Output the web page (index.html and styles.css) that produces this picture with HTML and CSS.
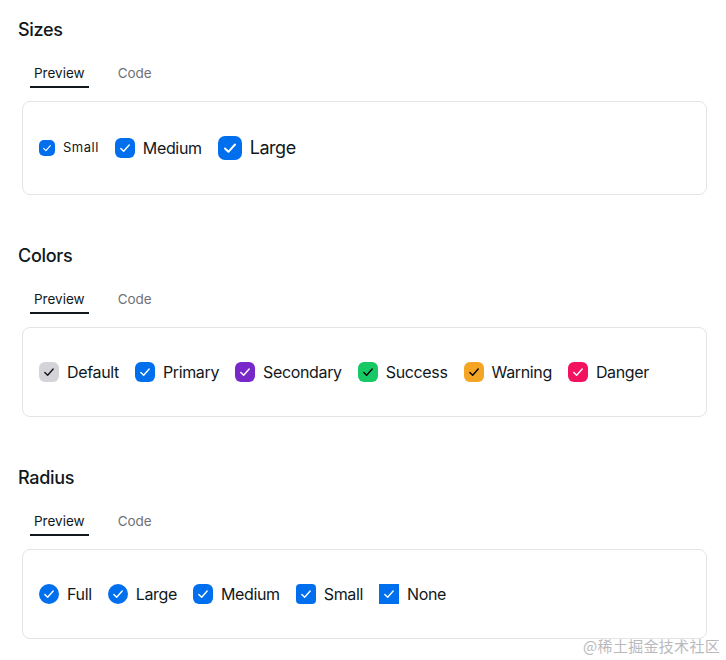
FILE: index.html
```html
<!DOCTYPE html>
<html>
<head>
<meta charset="utf-8">
<link rel="stylesheet" href="styles.css">
</head>
<body>
<main class="page">
  <section class="section">
    <h2 class="title">Sizes</h2>
    <div class="tabs"><span class="tab active">Preview</span><span class="tab">Code</span></div>
    <div class="card tall">
      <label class="cb sm"><span class="box primary"><svg viewBox="0 0 24 24"><path d="M7 12.5l3.4 3.3 6.6-7.3"/></svg></span><span class="lbl">Small</span></label>
      <label class="cb md"><span class="box primary"><svg viewBox="0 0 24 24"><path d="M7 12.5l3.4 3.3 6.6-7.3"/></svg></span><span class="lbl">Medium</span></label>
      <label class="cb lg"><span class="box primary"><svg viewBox="0 0 24 24"><path d="M7 12.5l3.4 3.3 6.6-7.3"/></svg></span><span class="lbl">Large</span></label>
    </div>
  </section>
  <section class="section">
    <h2 class="title">Colors</h2>
    <div class="tabs"><span class="tab active">Preview</span><span class="tab">Code</span></div>
    <div class="card">
      <label class="cb md"><span class="box default"><svg viewBox="0 0 24 24"><path d="M7 12.5l3.4 3.3 6.6-7.3"/></svg></span><span class="lbl">Default</span></label>
      <label class="cb md"><span class="box primary"><svg viewBox="0 0 24 24"><path d="M7 12.5l3.4 3.3 6.6-7.3"/></svg></span><span class="lbl">Primary</span></label>
      <label class="cb md"><span class="box secondary"><svg viewBox="0 0 24 24"><path d="M7 12.5l3.4 3.3 6.6-7.3"/></svg></span><span class="lbl">Secondary</span></label>
      <label class="cb md"><span class="box success"><svg viewBox="0 0 24 24"><path d="M7 12.5l3.4 3.3 6.6-7.3"/></svg></span><span class="lbl">Success</span></label>
      <label class="cb md"><span class="box warning"><svg viewBox="0 0 24 24"><path d="M7 12.5l3.4 3.3 6.6-7.3"/></svg></span><span class="lbl">Warning</span></label>
      <label class="cb md"><span class="box danger"><svg viewBox="0 0 24 24"><path d="M7 12.5l3.4 3.3 6.6-7.3"/></svg></span><span class="lbl">Danger</span></label>
    </div>
  </section>
  <section class="section">
    <h2 class="title">Radius</h2>
    <div class="tabs"><span class="tab active">Preview</span><span class="tab">Code</span></div>
    <div class="card">
      <label class="cb md"><span class="box primary r-full"><svg viewBox="0 0 24 24"><path d="M7 12.5l3.4 3.3 6.6-7.3"/></svg></span><span class="lbl">Full</span></label>
      <label class="cb md"><span class="box primary r-lg"><svg viewBox="0 0 24 24"><path d="M7 12.5l3.4 3.3 6.6-7.3"/></svg></span><span class="lbl">Large</span></label>
      <label class="cb md"><span class="box primary r-md"><svg viewBox="0 0 24 24"><path d="M7 12.5l3.4 3.3 6.6-7.3"/></svg></span><span class="lbl">Medium</span></label>
      <label class="cb md"><span class="box primary r-sm"><svg viewBox="0 0 24 24"><path d="M7 12.5l3.4 3.3 6.6-7.3"/></svg></span><span class="lbl">Small</span></label>
      <label class="cb md"><span class="box primary r-none"><svg viewBox="0 0 24 24"><path d="M7 12.5l3.4 3.3 6.6-7.3"/></svg></span><span class="lbl">None</span></label>
    </div>
  </section>
  <div class="watermark">@稀土掘金技术社区</div>
</main>
</body>
</html>
```
FILE: styles.css
```css
* { box-sizing: border-box; }
html, body { margin: 0; padding: 0; background: #fff; }
body {
  font-family: Inter, "Noto Sans", "Noto Sans CJK SC", sans-serif;
  color: #11181c;
}
.page {
  position: relative;
  width: 726px;
  height: 660px;
  padding: 17px 19px 0 18px;
  overflow: hidden;
}
.section { margin-bottom: 48px; }
.title {
  margin: 0;
  font-size: 18px;
  font-weight: 500;
  line-height: 26px;
  letter-spacing: -0.3px;
}
.tabs {
  display: flex;
  gap: 25px;
  margin: 17px 0 0 12px;
}
.tab {
  padding: 3px 4px 0;
  height: 28px;
  line-height: 20px;
  font-size: 13.5px;
  letter-spacing: 0;
  color: #71717a;
  border-bottom: 2px solid transparent;
}
.tab.active {
  color: #11181c;
  border-bottom-color: #11181c;
}
.card {
  display: flex;
  align-items: center;
  gap: 16px;
  margin: 13px 0 0 4px;
  padding: 32px 16px;
  border: 1px solid #e4e4e7;
  border-radius: 8px;
  line-height: 1.5;
}
.card.tall { padding-bottom: 33px; }
.cb {
  display: flex;
  align-items: center;
  gap: 8px;
  font-size: 16px;
  letter-spacing: -0.35px;
}
.cb.sm { font-size: 13px; letter-spacing: 0.5px; }
.cb.lg { font-size: 18px; letter-spacing: -0.45px; }
.box {
  display: flex;
  align-items: center;
  justify-content: center;
  width: 20px;
  height: 20px;
  border-radius: 6px;
  flex: none;
}
.cb.sm .box { width: 16px; height: 16px; border-radius: 5px; }
.cb.lg .box { width: 24px; height: 24px; border-radius: 7px; }
.box svg { width: 100%; height: 100%; }
.box svg path {
  fill: none;
  stroke: #fff;
  stroke-width: 1.7;
  stroke-linecap: round;
  stroke-linejoin: round;
}
.cb.lg .box svg path { stroke-width: 2; }
.primary { background: #006fee; }
.default { background: #d4d4d8; }
.default svg path { stroke: #11181c; }
.secondary { background: #7828c8; }
.success { background: #17c964; }
.success svg path { stroke: #000; }
.warning { background: #f5a524; }
.warning svg path { stroke: #000; }
.danger { background: #f31260; }
.r-full { border-radius: 50%; }
.r-lg { border-radius: 10px; }
.r-md { border-radius: 6px; }
.r-sm { border-radius: 4px; }
.r-none { border-radius: 0; }
.watermark {
  position: absolute;
  right: 6px;
  bottom: 4px;
  font-family: "Noto Sans CJK SC", sans-serif;
  font-size: 15px;
  color: #b9b9bd;
  letter-spacing: 0.3px;
}
```
